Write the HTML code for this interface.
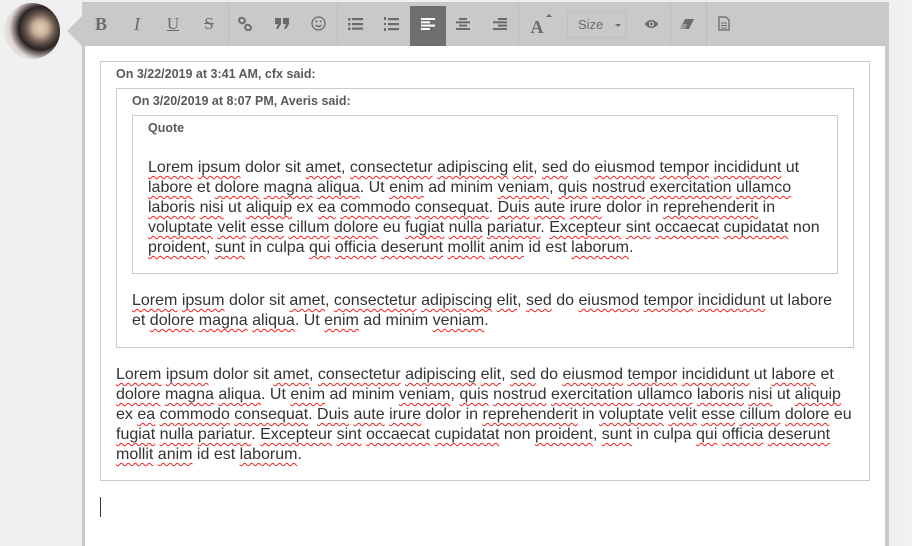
<!DOCTYPE html>
<html><head><meta charset="utf-8"><style>
*{margin:0;padding:0;box-sizing:border-box}
html,body{width:912px;height:546px;overflow:hidden}
body{background:#f1f0f1;position:relative;font-family:"Liberation Sans",sans-serif}
.av{position:absolute;left:4px;top:3px;width:56px;height:56px;border-radius:50%;background:radial-gradient(circle at 65% 45%,#e0cfbd 0,#c9b39a 15%,#6a5a50 30%,#2a2222 45%,#ddd6d2 65%,#f4f2f1 85%)}
.arrow{position:absolute;left:67px;top:16px;width:0;height:0;border-top:15px solid transparent;border-bottom:15px solid transparent;border-right:15px solid #c9c9c9}
.ed{position:absolute;left:82px;top:2px;width:807px;height:544px;background:#fff;border-left:3px solid #c9c9c9;border-right:4px solid #c9c9c9}
.tb{position:absolute;left:82px;top:2px;width:807px;height:44px;background:#c9c9c9}
.b{position:absolute;top:2px;height:44px;width:36px;color:#6b6b6b;text-align:center;line-height:44px;font-size:16px}
.sep{position:absolute;top:2px;height:44px;width:1px;background:#bcbcbc}
.q{position:absolute;border:1px solid #cacaca;background:#fff}
.h{position:absolute;font-size:12.5px;font-weight:bold;color:#5a5a5a}
.t{position:absolute;font-size:16px;line-height:20px;color:#333;white-space:nowrap}
u.w{text-decoration:underline wavy #e22;text-decoration-thickness:1px;text-underline-offset:3px}
</style></head><body>
<div class="av"></div>
<div class="arrow"></div>
<div class="ed"></div>
<div class="tb"></div>
<div class="b" style="left:83px;font-family:'Liberation Serif';font-weight:bold;font-size:18px">B</div>
<div class="b" style="left:119px;font-family:'Liberation Serif';font-style:italic;font-size:18px">I</div>
<div class="b" style="left:155px;font-family:'Liberation Serif';text-decoration:underline;font-size:17px">U</div>
<div class="b" style="left:191px;font-family:'Liberation Serif';text-decoration:line-through;font-size:17px">S</div>
<div class="sep" style="left:228px"></div>
<div class="b" style="left:227px"><svg width="14" height="14" viewBox="0 0 14 14" style="vertical-align:middle"><g fill="none" stroke="#6b6b6b" stroke-width="2"><rect x="1" y="1" width="6" height="5" rx="2.5" transform="rotate(40 4 3.5)"/><rect x="7" y="8" width="6" height="5" rx="2.5" transform="rotate(40 10 10.5)"/></g></svg></div>
<div class="b" style="left:264px"><svg width="14" height="11" viewBox="0 0 14 11" style="vertical-align:middle"><g fill="#6b6b6b"><path d="M0 0H6V6L3 11H1L3 6H0Z"/><path d="M8 0H14V6L11 11H9L11 6H8Z"/></g></svg></div>
<div class="b" style="left:300px"><svg width="15" height="15" viewBox="0 0 15 15" style="vertical-align:middle"><g fill="none" stroke="#6b6b6b" stroke-width="1.3"><circle cx="7.5" cy="7.5" r="6.5"/><path d="M4.5 9Q7.5 12 10.5 9"/></g><circle cx="5.3" cy="5.5" r="1" fill="#6b6b6b"/><circle cx="9.7" cy="5.5" r="1" fill="#6b6b6b"/></svg></div>
<div class="sep" style="left:337px"></div>
<div class="b" style="left:337px"><svg width="15" height="12" viewBox="0 0 15 12" style="vertical-align:middle"><g fill="#6b6b6b"><rect x="0" y="0" width="2.5" height="2.5"/><rect x="0" y="5" width="2.5" height="2.5"/><rect x="0" y="9.5" width="2.5" height="2.5"/><rect x="4" y="0" width="11" height="2.2"/><rect x="4" y="5" width="11" height="2.2"/><rect x="4" y="9.5" width="11" height="2.2"/></g></svg></div>
<div class="b" style="left:373px"><svg width="15" height="14" viewBox="0 0 15 14" style="vertical-align:middle"><g fill="#6b6b6b"><rect x="0" y="0" width="2" height="3"/><rect x="0" y="6" width="2" height="2"/><rect x="0" y="11" width="2" height="3"/><rect x="4" y="1" width="11" height="2.2"/><rect x="4" y="6" width="11" height="2.2"/><rect x="4" y="11" width="11" height="2.2"/></g></svg></div>
<div style="position:absolute;left:410px;top:6px;width:36px;height:40px;background:#6f6f6f"></div>
<div class="b" style="left:410px"><svg width="14" height="12" viewBox="0 0 14 12" style="vertical-align:middle"><g fill="#fff"><rect y="0" width="14" height="2"/><rect y="3.3" width="9" height="2"/><rect y="6.6" width="14" height="2"/><rect y="10" width="9" height="2"/></g></svg></div>
<div class="b" style="left:445px"><svg width="14" height="12" viewBox="0 0 14 12" style="vertical-align:middle"><g fill="#6b6b6b"><rect y="0" x="3" width="8" height="2"/><rect y="3.3" width="14" height="2"/><rect y="6.6" x="3" width="8" height="2"/><rect y="10" width="14" height="2"/></g></svg></div>
<div class="b" style="left:482px"><svg width="14" height="12" viewBox="0 0 14 12" style="vertical-align:middle"><g fill="#6b6b6b"><rect y="0" x="5" width="9" height="2"/><rect y="3.3" width="14" height="2"/><rect y="6.6" x="5" width="9" height="2"/><rect y="10" width="14" height="2"/></g></svg></div>
<div class="sep" style="left:518px"></div>
<div class="b" style="left:519px;font-family:'Liberation Serif';font-weight:bold;font-size:18px;line-height:50px">A</div>
<div style="position:absolute;left:546px;top:14px;border-left:3px solid transparent;border-right:3px solid transparent;border-bottom:3px solid #6b6b6b"></div>
<div style="position:absolute;left:567px;top:11px;width:60px;height:27px;border:1px solid #c0c0c0;font-size:13px;color:#6b6b6b;line-height:25px;padding-left:10px">Size<span style="position:absolute;left:47px;top:12px;border-left:3px solid transparent;border-right:3px solid transparent;border-top:3px solid #6b6b6b"></span></div>
<div class="b" style="left:633px"><svg width="15" height="10" viewBox="0 0 15 10" style="vertical-align:middle"><path d="M0.5 5Q7.5-3 14.5 5Q7.5 13 0.5 5Z" fill="#6b6b6b"/><circle cx="7.5" cy="5" r="2.6" fill="#c9c9c9"/><circle cx="7.5" cy="5" r="1.4" fill="#6b6b6b"/></svg></div>
<div class="sep" style="left:670px"></div>
<div class="b" style="left:669px"><svg width="14" height="10" viewBox="0 0 14 10" style="vertical-align:middle"><path d="M5 0H14L9 10H0Z" fill="#6b6b6b"/><path d="M2.5 5H7.5L5 10H0Z" fill="#999"/></svg></div>
<div class="sep" style="left:706px"></div>
<div class="b" style="left:706px"><svg width="12" height="15" viewBox="0 0 12 15" style="vertical-align:middle"><path d="M1 1H8L11 4V14H1Z" fill="none" stroke="#6b6b6b" stroke-width="1.3"/><path d="M3 7H9M3 9.5H9M3 12H9" stroke="#6b6b6b"/></svg></div>

<div class="q" style="left:100px;top:61px;width:770px;height:420px"></div>
<div class="h" style="left:116px;top:67px">On 3/22/2019 at 3:41 AM, cfx said:</div>
<div class="q" style="left:116px;top:88px;width:738px;height:260px"></div>
<div class="h" style="left:132px;top:94px">On 3/20/2019 at 8:07 PM, Averis said:</div>
<div class="q" style="left:132px;top:115px;width:706px;height:159px"></div>
<div class="h" style="left:148px;top:121px">Quote</div>
<div class="t" style="left:148px;top:158px"><u class="w">Lorem</u> <u class="w">ipsum</u> dolor sit <u class="w">amet</u>, <u class="w">consectetur</u> <u class="w">adipiscing</u> <u class="w">elit</u>, <u class="w">sed</u> do <u class="w">eiusmod</u> <u class="w">tempor</u> <u class="w">incididunt</u> ut<br><u class="w">labore</u> et <u class="w">dolore</u> <u class="w">magna</u> <u class="w">aliqua</u>. Ut <u class="w">enim</u> ad minim <u class="w">veniam</u>, <u class="w">quis</u> <u class="w">nostrud</u> <u class="w">exercitation</u> <u class="w">ullamco</u><br><u class="w">laboris</u> <u class="w">nisi</u> ut <u class="w">aliquip</u> ex <u class="w">ea</u> <u class="w">commodo</u> <u class="w">consequat</u>. <u class="w">Duis</u> <u class="w">aute</u> <u class="w">irure</u> dolor in <u class="w">reprehenderit</u> in<br><u class="w">voluptate</u> <u class="w">velit</u> <u class="w">esse</u> <u class="w">cillum</u> <u class="w">dolore</u> eu <u class="w">fugiat</u> <u class="w">nulla</u> <u class="w">pariatur</u>. <u class="w">Excepteur</u> <u class="w">sint</u> <u class="w">occaecat</u> <u class="w">cupidatat</u> non<br><u class="w">proident</u>, <u class="w">sunt</u> in culpa <u class="w">qui</u> <u class="w">officia</u> <u class="w">deserunt</u> <u class="w">mollit</u> <u class="w">anim</u> id est <u class="w">laborum</u>.</div>
<div class="t" style="left:132px;top:291px"><u class="w">Lorem</u> <u class="w">ipsum</u> dolor sit <u class="w">amet</u>, <u class="w">consectetur</u> <u class="w">adipiscing</u> <u class="w">elit</u>, <u class="w">sed</u> do <u class="w">eiusmod</u> <u class="w">tempor</u> <u class="w">incididunt</u> ut labore<br>et <u class="w">dolore</u> <u class="w">magna</u> <u class="w">aliqua</u>. Ut <u class="w">enim</u> ad minim <u class="w">veniam</u>.</div>
<div class="t" style="left:116px;top:365px"><u class="w">Lorem</u> <u class="w">ipsum</u> dolor sit <u class="w">amet</u>, <u class="w">consectetur</u> <u class="w">adipiscing</u> <u class="w">elit</u>, <u class="w">sed</u> do <u class="w">eiusmod</u> <u class="w">tempor</u> <u class="w">incididunt</u> ut <u class="w">labore</u> et<br><u class="w">dolore</u> <u class="w">magna</u> <u class="w">aliqua</u>. Ut <u class="w">enim</u> ad minim <u class="w">veniam</u>, <u class="w">quis</u> <u class="w">nostrud</u> <u class="w">exercitation</u> <u class="w">ullamco</u> <u class="w">laboris</u> <u class="w">nisi</u> ut <u class="w">aliquip</u><br>ex <u class="w">ea</u> <u class="w">commodo</u> <u class="w">consequat</u>. <u class="w">Duis</u> <u class="w">aute</u> <u class="w">irure</u> dolor in <u class="w">reprehenderit</u> in <u class="w">voluptate</u> <u class="w">velit</u> <u class="w">esse</u> <u class="w">cillum</u> <u class="w">dolore</u> eu<br><u class="w">fugiat</u> <u class="w">nulla</u> <u class="w">pariatur</u>. <u class="w">Excepteur</u> <u class="w">sint</u> <u class="w">occaecat</u> <u class="w">cupidatat</u> non <u class="w">proident</u>, <u class="w">sunt</u> in culpa <u class="w">qui</u> <u class="w">officia</u> <u class="w">deserunt</u><br><u class="w">mollit</u> <u class="w">anim</u> id est <u class="w">laborum</u>.</div>
<div style="position:absolute;left:100px;top:497px;width:1px;height:20px;background:#333"></div>
<div style="position:absolute;left:905px;top:0;width:7px;height:546px;background:#f4f3f4"></div>
</body></html>
